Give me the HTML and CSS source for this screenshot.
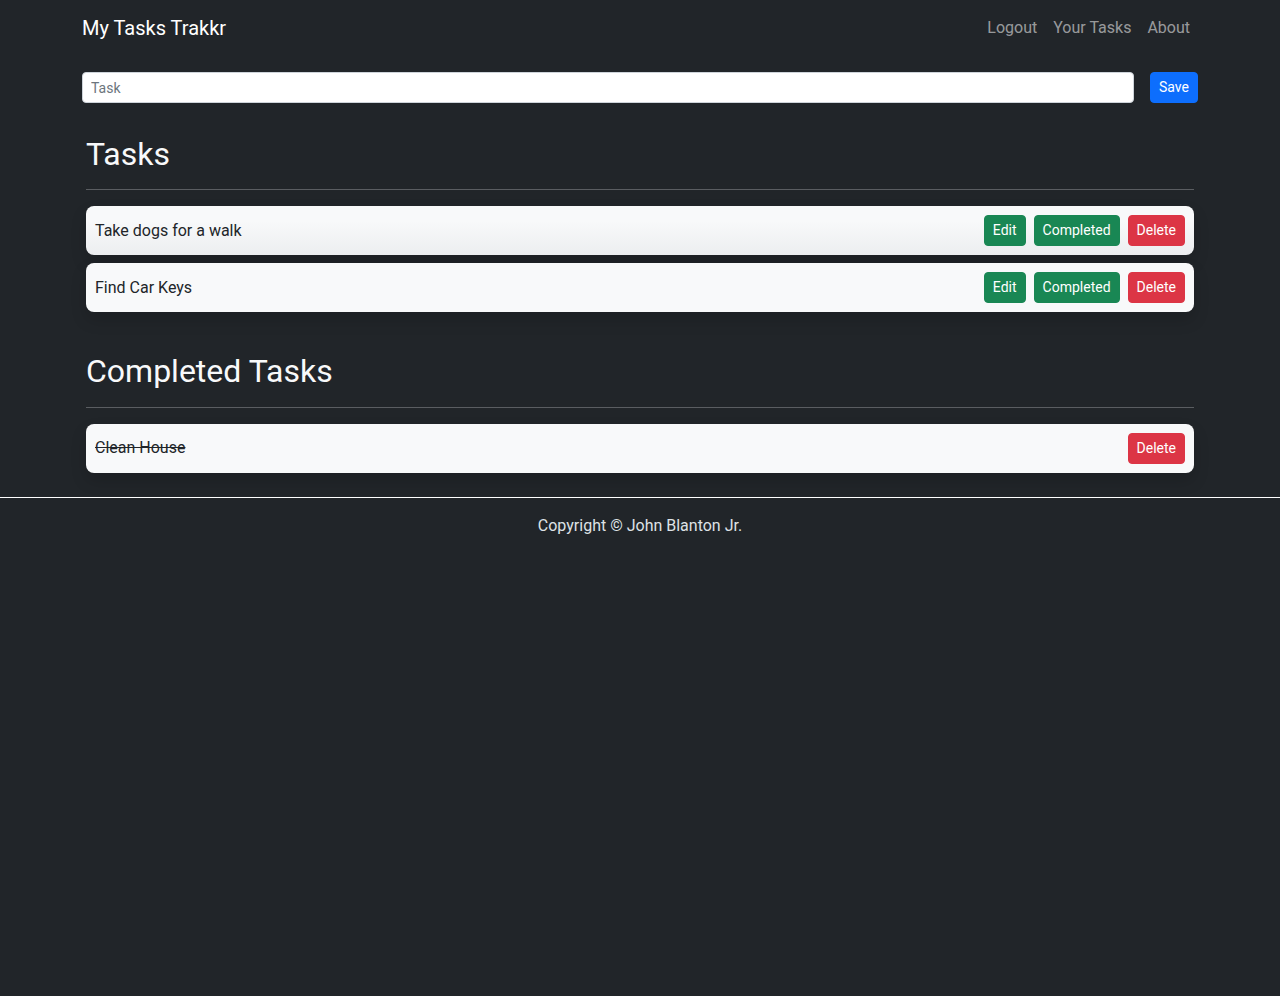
FILE: index.html
```html
<!DOCTYPE html>
<html lang="en">
<head>
<meta charset="utf-8">
<title>My Tasks Trakkr</title>
<link rel="stylesheet" href="styles.css">
</head>
<body>
<nav class="navbar">
  <div class="container nav-inner">
    <a class="brand" href="#">My Tasks Trakkr</a>
    <ul class="nav-links">
      <li><a href="#">Logout</a></li>
      <li><a href="#">Your Tasks</a></li>
      <li><a href="#">About</a></li>
    </ul>
  </div>
</nav>
<main class="container">
  <form class="task-form">
    <input class="task-input" type="text" placeholder="Task">
    <button class="btn btn-primary" type="button">Save</button>
  </form>
  <section class="section">
    <h2 class="section-title">Tasks</h2>
    <hr class="divider">
    <div class="task-card hovered">
      <span class="task-text">Take dogs for a walk</span>
      <div class="actions">
        <button class="btn btn-success">Edit</button>
        <button class="btn btn-success">Completed</button>
        <button class="btn btn-danger">Delete</button>
      </div>
    </div>
    <div class="task-card">
      <span class="task-text">Find Car Keys</span>
      <div class="actions">
        <button class="btn btn-success">Edit</button>
        <button class="btn btn-success">Completed</button>
        <button class="btn btn-danger">Delete</button>
      </div>
    </div>
  </section>
  <section class="section">
    <h2 class="section-title">Completed Tasks</h2>
    <hr class="divider">
    <div class="task-card">
      <span class="task-text done">Clean House</span>
      <div class="actions">
        <button class="btn btn-danger">Delete</button>
      </div>
    </div>
  </section>
</main>
<footer class="footer">
  <p>Copyright © John Blanton Jr.</p>
</footer>
</body>
</html>
```
FILE: styles.css
```css
* { box-sizing: border-box; }
html, body { margin: 0; padding: 0; }
body {
  background: #212529;
  color: #dee2e6;
  font-family: Roboto, "Liberation Sans", sans-serif;
  font-size: 16px;
  line-height: 1.5;
  min-height: 996px;
}
.container {
  width: 1140px;
  margin: 0 auto;
  padding: 0 12px;
}
.navbar { padding: 8px 0; }
.nav-inner {
  display: flex;
  align-items: center;
  justify-content: space-between;
  height: 40px;
}
.brand {
  color: #fff;
  font-size: 20px;
  line-height: 30px;
  text-decoration: none;
  padding: 5px 0;
}
.nav-links {
  list-style: none;
  display: flex;
  margin: 0;
  padding: 0;
}
.nav-links a {
  display: block;
  padding: 8px;
  color: rgba(255,255,255,.55);
  text-decoration: none;
  line-height: 24px;
}
.task-form {
  display: flex;
  gap: 16px;
  margin-top: 16px;
}
.task-input {
  flex: 1;
  height: 31px;
  padding: 4px 8px;
  font-family: inherit;
  font-size: 14px;
  color: #212529;
  background: #fff;
  border: 1px solid #ced4da;
  border-radius: 4px;
  outline: none;
}
.task-input::placeholder { color: #6c757d; }
.btn {
  font-family: inherit;
  font-size: 14px;
  line-height: 21px;
  padding: 4px 8px;
  border: 1px solid transparent;
  border-radius: 4px;
  color: #fff;
  cursor: pointer;
  height: 31px;
}
.btn-primary { background: #0d6efd; border-color: #0d6efd; }
.btn-success { background: #198754; border-color: #198754; }
.btn-danger { background: #dc3545; border-color: #dc3545; }
.section {
  display: flow-root;
  padding: 0 4px;
  margin-top: 32px;
}
.section-title {
  margin: 0;
  font-size: 32px;
  line-height: 1.2;
  color: #f8f9fa;
  font-weight: 400;
}
.divider {
  margin: 16px 0;
  border: 0;
  border-top: 1px solid #dee2e6;
  opacity: .3;
}
.task-card {
  display: flex;
  align-items: center;
  justify-content: space-between;
  background: #f8f9fa;
  border-radius: 8px;
  padding: 8px 9px;
  height: 49px;
  margin-bottom: 8px;
  box-shadow: 0 8px 16px rgba(0,0,0,.15);
}
.task-card.hovered {
  background: linear-gradient(#f8f9fa 30%, #eceef0);
}
.task-text {
  color: #212529;
  font-size: 16px;
}
.task-text.done { text-decoration: line-through; }
.actions {
  display: flex;
  gap: 8px;
}
.footer {
  margin-top: 16px;
  border-top: 1px solid #fff;
  padding-top: 16px;
  text-align: center;
  color: #dee2e6;
}
.footer p { margin: 0; }
```
